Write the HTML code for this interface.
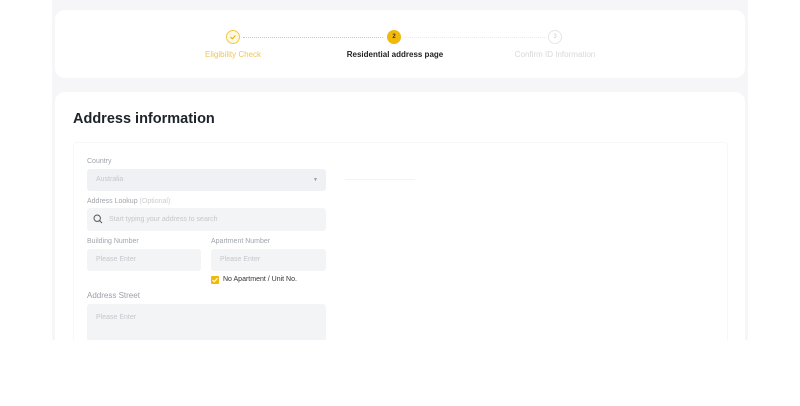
<!DOCTYPE html><html><head><style>
body{margin:0;width:800px;height:406px;background:#fff;font-family:"Liberation Sans",sans-serif;position:relative;overflow:hidden}
.bg{position:absolute;left:52px;top:0;width:696px;height:340px;background:#f6f6f8}
.card{position:absolute;background:#fff;border-radius:10px}
.abs{position:absolute}
.lbl{position:absolute;font-size:7px;color:#a0a4ab}
.inp{position:absolute;background:#f3f4f6;border-radius:3px;font-size:7px;color:#c4c7cc;box-sizing:border-box;padding-left:9px}
.dot{position:absolute;top:37px;height:0;border-top:1px dotted}
</style></head><body>
<div class="bg"></div>
<div class="card" style="left:55px;top:10px;width:690px;height:68px"></div>
<div class="abs" style="left:226px;top:30px;width:12px;height:12px;border:1px solid #f0c94a;border-radius:50%;background:#fff8e0"></div>
<svg class="abs" style="left:229px;top:33px" width="8" height="8" viewBox="0 0 8 8"><path d="M1.5 4l1.8 1.8L6.5 2.5" stroke="#e0a800" stroke-width="1" fill="none"/></svg>
<div class="dot" style="left:243px;width:140px;border-color:#f0c94a"></div>
<div class="abs" style="left:387px;top:30px;width:14px;height:14px;border-radius:50%;background:#f0b90b;font-size:6px;font-weight:bold;color:#333;text-align:center;line-height:14px">2</div>
<div class="dot" style="left:405px;width:140px;border-color:#eaeaea"></div>
<div class="abs" style="left:548px;top:30px;width:12px;height:12px;border:1px solid #e6e6e6;border-radius:50%;font-size:6px;color:#ccc;text-align:center;line-height:12px">3</div>
<div class="abs" style="left:180px;top:50px;width:106px;text-align:center;font-size:8px;color:#ecc55a">Eligibility Check</div>
<div class="abs" style="left:330px;top:50px;width:130px;text-align:center;font-size:8px;color:#222;font-weight:bold">Residential address page</div>
<div class="abs" style="left:500px;top:50px;width:110px;text-align:center;font-size:8px;color:#d8d8d8">Confirm ID Information</div>
<div class="card" style="left:55px;top:92px;width:690px;height:260px"></div>
<div class="abs" style="left:73px;top:111px;font-size:14.5px;font-weight:bold;color:#1e2329">Address information</div>
<div class="abs" style="left:73px;top:142px;width:653px;height:210px;border:1px solid #f7f7f7;border-radius:4px"></div>
<div class="lbl" style="left:87px;top:158px">Country</div>
<div class="inp" style="left:87px;top:169px;width:239px;height:22px;line-height:22px;background:#eff1f4">Australia<span style="position:absolute;right:8px;font-size:5px;color:#999">▼</span></div>
<div class="abs" style="left:345px;top:179px;width:70px;height:1px;background:#f4f4f4"></div>
<div class="lbl" style="left:87px;top:198px">Address Lookup <span style="color:#ccc">(Optional)</span></div>
<div class="inp" style="left:87px;top:208px;width:239px;height:23px;line-height:23px;padding-left:22px">Start typing your address to search</div>
<svg class="abs" style="left:93px;top:214px" width="10" height="10" viewBox="0 0 10 10"><circle cx="4.2" cy="4.2" r="3.2" stroke="#555" stroke-width="1" fill="none"/><path d="M6.6 6.6L9 9" stroke="#555" stroke-width="1"/></svg>
<div class="lbl" style="left:87px;top:238px">Building Number</div>
<div class="lbl" style="left:211px;top:238px">Apartment Number</div>
<div class="inp" style="left:87px;top:249px;width:114px;height:22px;line-height:22px">Please Enter</div>
<div class="inp" style="left:211px;top:249px;width:115px;height:22px;line-height:22px">Please Enter</div>
<div class="abs" style="left:211px;top:276px;width:8px;height:8px;background:#f0b90b;border-radius:1px"></div>
<svg class="abs" style="left:211px;top:276px" width="8" height="8" viewBox="0 0 8 8"><path d="M1.5 4l1.7 1.7L6.5 2.3" stroke="#fff" stroke-width="1.1" fill="none"/></svg>
<div class="abs" style="left:223px;top:276px;font-size:7px;color:#333">No Apartment / Unit No.</div>
<div class="abs" style="left:87px;top:291px;font-size:8px;color:#9a9ea5">Address Street</div>
<div class="inp" style="left:87px;top:304px;width:239px;height:36px;line-height:28px;border-radius:3px 3px 0 0">Please Enter</div>
<div class="abs" style="left:0;top:340px;width:800px;height:66px;background:#fff"></div>
</body></html>
